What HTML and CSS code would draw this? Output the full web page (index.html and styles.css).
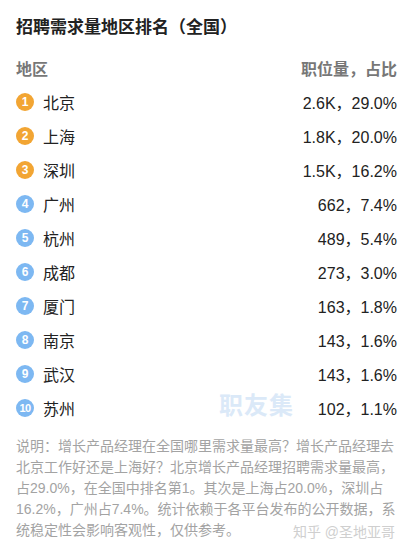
FILE: index.html
```html
<!DOCTYPE html>
<html lang="zh">
<head>
<meta charset="utf-8">
<link rel="stylesheet" href="styles.css">
</head>
<body>
<div class="page">
  <h1 class="title">招聘需求量地区排名（全国）</h1>
  <div class="row head">
    <span>地区</span>
    <span>职位量，占比</span>
  </div>
  <ul class="list">
    <li class="row"><span class="city"><i class="badge top">1</i>北京</span><span class="val">2.6K，29.0%</span></li>
    <li class="row"><span class="city"><i class="badge top">2</i>上海</span><span class="val">1.8K，20.0%</span></li>
    <li class="row"><span class="city"><i class="badge top">3</i>深圳</span><span class="val">1.5K，16.2%</span></li>
    <li class="row"><span class="city"><i class="badge">4</i>广州</span><span class="val">662，7.4%</span></li>
    <li class="row"><span class="city"><i class="badge">5</i>杭州</span><span class="val">489，5.4%</span></li>
    <li class="row"><span class="city"><i class="badge">6</i>成都</span><span class="val">273，3.0%</span></li>
    <li class="row"><span class="city"><i class="badge">7</i>厦门</span><span class="val">163，1.8%</span></li>
    <li class="row"><span class="city"><i class="badge">8</i>南京</span><span class="val">143，1.6%</span></li>
    <li class="row"><span class="city"><i class="badge">9</i>武汉</span><span class="val">143，1.6%</span></li>
    <li class="row"><span class="city"><i class="badge small">10</i>苏州</span><span class="val">102，1.1%</span></li>
  </ul>
  <p class="note">说明：增长产品经理在全国哪里需求量最高？增长产品经理去北京工作好还是上海好？北京增长产品经理招聘需求量最高，占29.0%，在全国中排名第1。其次是上海占20.0%，深圳占16.2%，广州占7.4%。统计依赖于各平台发布的公开数据，系</p>
  <div class="note-end">
    <span class="note-tail">统稳定性会影响客观性，仅供参考。</span>
    <span class="mark-zhihu">知乎 @圣地亚哥</span>
  </div>
  <div class="mark-site">职友集</div>
</div>
</body>
</html>
```

FILE: styles.css
```css
* { box-sizing: border-box; }
html, body {
  margin: 0;
  padding: 0;
  background: #fff;
}
body {
  font-family: "Liberation Sans", "Noto Sans CJK SC", sans-serif;
  color: #222;
}
.page {
  position: relative;
  width: 407px;
  height: 555px;
  padding: 16px 10px 0 16px;
  overflow: hidden;
}
.title {
  margin: 0;
  font-size: 17px;
  line-height: 24px;
  font-weight: bold;
  color: #222;
}
.row {
  display: flex;
  justify-content: space-between;
  align-items: center;
  height: 34px;
  font-size: 16px;
}
.head {
  margin-top: 11px;
  color: #777;
  font-weight: bold;
}
.list {
  list-style: none;
  margin: 0;
  padding: 0;
}
.city {
  display: flex;
  align-items: center;
  gap: 9px;
  color: #222;
}
.badge {
  flex: none;
  display: flex;
  align-items: center;
  justify-content: center;
  width: 18px;
  height: 18px;
  border-radius: 50%;
  background: #7db8f2;
  color: #fff;
  font-style: normal;
  font-weight: bold;
  font-size: 12px;
  line-height: 1;
}
.badge.top { background: #f2a533; }
.badge.small { font-size: 11px; letter-spacing: -0.5px; }
.val { color: #222; }
.note {
  margin: 11px 0 0;
  font-size: 14px;
  line-height: 21px;
  color: #a3a3a3;
}
.note-end {
  display: flex;
  justify-content: space-between;
  align-items: center;
  font-size: 14px;
  line-height: 21px;
  padding-right: 2px;
}
.note-tail { color: #a3a3a3; }
.mark-zhihu {
  color: #cfcfcf;
  position: relative;
  top: 2px;
  text-shadow: 0 0 2px #fff, 0 0 2px #fff;
}
.mark-site {
  position: absolute;
  left: 219px;
  top: 386px;
  font-size: 24px;
  font-weight: bold;
  color: #dbe9f8;
  letter-spacing: 1px;
}
```
